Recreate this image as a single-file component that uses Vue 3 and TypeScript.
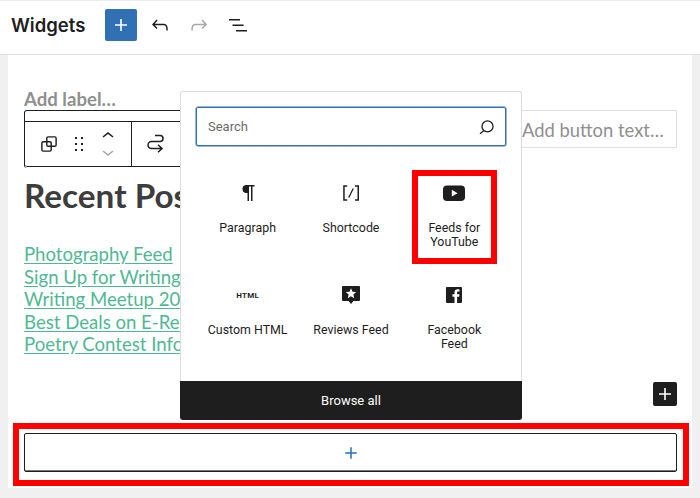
<script setup lang="ts">
const links: string[] = [
  'Photography Feed',
  'Sign Up for Writing Workshop',
  'Writing Meetup 2021',
  'Best Deals on E-Readers',
  'Poetry Contest Info',
]
</script>

<template>
  <div class="page">
    <header class="topbar">
      <h1 class="title">Widgets</h1>
      <button class="add-main" aria-label="Add">
        <svg viewBox="0 0 24 24" width="24" height="24"><path d="M18 11.2h-5.2V6h-1.6v5.2H6v1.6h5.2V18h1.6v-5.2H18z" fill="#fff" /></svg>
      </button>
      <svg class="tool first" viewBox="0 0 24 24" width="24" height="24"><path d="M18.3 11.7c-.6-.6-1.4-.9-2.3-.9H6.7l2.9-3.3-1.1-1-4.5 5L8.5 16l1-1-2.7-2.7H16c.5 0 .9.2 1.3.5 1 1 1 3.4 1 4.5v.3h1.5v-.2c0-1.5 0-4.3-1.5-5.7z" fill="#1e1e1e" /></svg>
      <svg class="tool" viewBox="0 0 24 24" width="24" height="24"><path d="M15.6 6.5l-1.1 1 2.9 3.3H8c-.9 0-1.7.3-2.3.9-1.4 1.5-1.4 4.2-1.4 5.6v.2h1.5v-.3c0-1.1 0-3.5 1-4.5.3-.3.7-.5 1.3-.5h9.2L14.5 15l1.1 1.1 4.6-4.6-4.6-5z" fill="#a7a7a7" /></svg>
      <svg class="tool" viewBox="0 0 24 24" width="24" height="24"><path d="M3 6h11v1.5H3V6zm3.5 5.5h11V13h-11v-1.5zM21 17H10v1.5h11V17z" fill="#1e1e1e" /></svg>
    </header>

    <main class="canvas">
      <div class="editor">
        <div class="label-text">Add label…</div>
        <div class="search-row">
          <div class="toolbar">
            <div class="group first-group">
              <svg viewBox="0 0 18 18" width="16" height="16" fill="none" stroke="#1e1e1e" stroke-width="1.6">
                <rect x="6.5" y="1" width="10.500" height="10.500" rx="1.500" />
                <rect x="1" y="6.500" width="10.500" height="10.500" rx="1.500" />
              </svg>
              <svg class="drag" viewBox="0 0 24 24" width="24" height="24"><path d="M8 7h2V5H8v2zm0 6h2v-2H8v2zm0 6h2v-2H8v2zm6-14v2h2V5h-2zm0 8h2v-2h-2v2zm0 6h2v-2h-2v2z" fill="#1e1e1e" /></svg>
              <div class="movers">
                <svg viewBox="0 4 24 16" width="24" height="16"><path d="M6.5 12.4L12 8l5.5 4.4-.9 1.2L12 10l-4.5 3.6-1-1.2z" fill="#1e1e1e" /></svg>
                <svg viewBox="0 4 24 16" width="24" height="16"><path d="M17.5 11.6L12 16l-5.5-4.4.9-1.2L12 14l4.5-3.6 1 1.2z" fill="#a7a7a7" /></svg>
              </div>
            </div>
            <div class="group">
              <svg viewBox="0 0 24 24" width="24" height="24" fill="none" stroke="#1e1e1e" stroke-width="1.5">
                <path d="M12 3.500H17A3 3 0 0 1 17 9.500H8.500A3.500 3.500 0 0 0 8.500 16.500H19M15 12.800L19 16.500L15 20.200" />
              </svg>
            </div>
          </div>
          <div class="button-text">Add button text…</div>
        </div>
        <h2 class="recent">Recent Posts</h2>
        <ul class="posts">
          <li v-for="link in links" :key="link"><a>{{ link }}</a></li>
        </ul>
        <div class="small-add-row">
          <button class="small-add" aria-label="Add block">
            <svg viewBox="0 0 24 24" width="24" height="24"><path d="M18 11.2h-5.2V6h-1.6v5.2H6v1.6h5.2V18h1.6v-5.2H18z" fill="#fff" /></svg>
          </button>
        </div>
      </div>

      <div class="marked">
        <button class="appender" aria-label="Add widget">
          <svg viewBox="0 0 24 24" width="24" height="24"><path d="M17.800 11.250h-5.050V6.200h-1.500v5.050H6.200v1.500h5.050v5.050h1.500v-5.050h5.050z" fill="#2271c0" /></svg>
        </button>
      </div>
    </main>

    <section class="inserter">
      <div class="inserter-body">
        <div class="search">
          <span>Search</span>
          <svg viewBox="0 0 24 24" width="24" height="24" fill="none" stroke="#1e1e1e" stroke-width="1.3"><circle cx="11.500" cy="11.400" r="5.500" /><path d="M8 15.500 4 18.800" /></svg>
        </div>
        <div class="grid">
          <div class="item">
            <div class="icon"><svg viewBox="0 0 24 24" width="24" height="24"><path d="M10.500 4H18.500V5.500H16.500V20H15V5.500H13V20H11.500V12H10.500A4 4 0 0 1 10.500 4z" fill="#1e1e1e" /></svg></div>
            <div class="name">Paragraph</div>
          </div>
          <div class="item">
            <div class="icon"><svg viewBox="0 0 24 24" width="24" height="24"><path d="M16 4.200v1.500h2.500v12.500H16v1.500h4V4.200h-4zM4.200 19.700h4v-1.500H5.700V5.700h2.500V4.200h-4z" fill="#1e1e1e" /><path d="M14.200 7.500 9.800 16.500" stroke="#1e1e1e" stroke-width="1.300" /></svg></div>
            <div class="name">Shortcode</div>
          </div>
          <div class="item">
            <div class="icon"><svg viewBox="0 0 24 24" width="24" height="24"><rect x="1" y="4.500" width="22" height="15.500" rx="4" fill="#1e1e1e" /><path d="M9.800 8.800 15.600 12.200 9.800 15.600z" fill="#fff" /></svg></div>
            <div class="name">Feeds for<br />YouTube</div>
            <div class="red-mark"></div>
          </div>
          <div class="item">
            <div class="icon"><span class="html">HTML</span></div>
            <div class="name">Custom HTML</div>
          </div>
          <div class="item">
            <div class="icon"><svg viewBox="0 0 24 24" width="24" height="24"><path d="M4 3H20a1 1 0 0 1 1 1V17a1 1 0 0 1-1 1H14.500L12 21 9.500 18H4a1 1 0 0 1-1-1V4a1 1 0 0 1 1-1z" fill="#1e1e1e" /><path d="M12 5.200 13.500 8.700 17.200 9.100 14.400 11.500 15.200 15.200 12 13.300 8.800 15.200 9.600 11.500 6.800 9.100 10.500 8.700z" fill="#fff" /></svg></div>
            <div class="name">Reviews Feed</div>
          </div>
          <div class="item">
            <div class="icon"><svg viewBox="0 0 24 24" width="24" height="24"><path transform="translate(1.300 1.300) scale(.89)" d="M20 3H4c-.6 0-1 .4-1 1v16c0 .5.4 1 1 1h8.600v-7h-2.300v-2.700h2.300v-2c0-2.300 1.400-3.600 3.500-3.600 1 0 1.800.1 2.100.1v2.400h-1.400c-1.100 0-1.300.5-1.300 1.300v1.700h2.700l-.4 2.800h-2.300v7H20c.5 0 1-.4 1-1V4c0-.6-.4-1-1-1z" fill="#1e1e1e" /></svg></div>
            <div class="name">Facebook<br />Feed</div>
          </div>
        </div>
      </div>
      <div class="browse">Browse all</div>
    </section>
  </div>
</template>

<style>
html,
body {
  margin: 0;
  background: #f0f0f0;
}
</style>

<style scoped>
.page {
  position: relative;
  width: 700px;
  height: 498px;
  overflow: hidden;
  display: flex;
  flex-direction: column;
  background: #f0f0f0;
  font-family: Roboto, "Liberation Sans", sans-serif;
  color: #1e1e1e;
}
.topbar {
  height: 55px;
  flex: none;
  box-sizing: border-box;
  display: flex;
  align-items: center;
  background: #fff;
  border-top: 1px solid #ececec;
  border-bottom: 1px solid #e0e0e0;
  padding: 0 0 6px 11px;
}
.title {
  margin: 0 20px 0 0;
  font-family: Inter, sans-serif;
  font-size: 18.500px;
  font-weight: 600;
  color: #1e1e1e;
}
button {
  border: 0;
  padding: 0;
  display: flex;
  align-items: center;
  justify-content: center;
  cursor: pointer;
}
.add-main {
  width: 32px;
  height: 32px;
  background: #3070b3;
  border-radius: 2px;
}
.tool {
  margin-left: 15px;
}
.tool.first {
  margin-left: 11px;
}
.canvas {
  flex: none;
  height: 433px;
  margin: 0 8px;
  background: #fff;
  display: flex;
  flex-direction: column;
}
.editor {
  height: 368px;
  padding: 34px 15px 0 16px;
  box-sizing: border-box;
  display: flex;
  flex-direction: column;
}
.label-text {
  font-family: Lato, sans-serif;
  font-weight: 700;
  font-size: 18.600px;
  line-height: 21px;
  color: #8f8f8f;
}
.search-row {
  display: flex;
  height: 38px;
}
.toolbar {
  width: 320px;
  height: 58px;
  box-sizing: border-box;
  flex: none;
  display: flex;
  border: 1px solid #1e1e1e;
  border-bottom: 0;
  border-radius: 3px 3px 0 3px;
  padding-top: 10px;
  position: relative;
  z-index: 1;
}
.group {
  height: 46px;
  border-top: 1px solid #1e1e1e;
  border-bottom: 1px solid #1e1e1e;
  box-sizing: border-box;
  display: flex;
  align-items: center;
  padding-left: 11px;
  flex: 1;
}
.first-group {
  flex: none;
  width: 107px;
  border-right: 1px solid #1e1e1e;
  padding-left: 16px;
  border-radius: 0 0 0 3px;
}
.drag {
  margin-left: 10px;
}
.movers {
  margin-left: 5px;
  display: flex;
  flex-direction: column;
}
.button-text {
  margin-left: 178px;
  flex: 1;
  border: 1px solid #e0e0e0;
  border-left: 0;
  font-family: Lato, sans-serif;
  font-size: 18.400px;
  line-height: 38px;
  color: #8f8f8f;
  white-space: nowrap;
}
.recent {
  width: 156px;
  overflow: hidden;
  margin: 28px 0 0;
  font-family: Lato, sans-serif;
  font-weight: 700;
  font-size: 33.300px;
  line-height: 38px;
  color: #3d3d3d;
  white-space: nowrap;
}
.posts {
  width: 156px;
  overflow: hidden;
  list-style: none;
  margin: 29px 0 0;
  padding: 0;
  font-family: Lato, sans-serif;
  font-size: 18.600px;
  line-height: 22.500px;
  color: #4fb893;
  white-space: nowrap;
}
.posts a {
  text-decoration: underline;
  text-underline-offset: 2px;
}
.small-add-row {
  display: flex;
  justify-content: flex-end;
  margin-top: 26px;
}
.small-add {
  width: 24px;
  height: 24px;
  background: #1e1e1e;
  border-radius: 2px;
}
.marked {
  margin: 0 3px 0 5px;
  border: 6px solid #ff0000;
  padding: 4px 6px 7px 5px;
  height: 63px;
  box-sizing: border-box;
}
.appender {
  width: 100%;
  height: 39px;
  background: #fff;
  border: 1px solid #1e1e1e;
  border-radius: 2px;
  box-shadow: inset 0 -1px 0 #777;
}
.inserter {
  position: absolute;
  left: 180px;
  top: 91px;
  width: 342px;
  height: 329px;
  box-sizing: border-box;
  display: flex;
  flex-direction: column;
  background: #fff;
  border: 1px solid #ddd;
  border-bottom: 0;
  border-radius: 3px;
  z-index: 5;
}
.inserter-body {
  flex: 1 1 0;
  min-height: 0;
  padding: 15px 15px 0;
}
.search {
  height: 39px;
  box-sizing: border-box;
  border: 1px solid #3070b3;
  border-radius: 2px;
  box-shadow: 0 0 0 0.5px #3070b3;
  display: flex;
  align-items: center;
  justify-content: space-between;
  padding: 0 5px 0 11px;
  font-size: 13px;
  color: #6b6b6b;
}
.grid {
  margin-top: 35px;
  display: grid;
  grid-template-columns: repeat(3, 1fr);
  grid-template-rows: 102px auto;
}
.item {
  position: relative;
  display: flex;
  flex-direction: column;
  align-items: center;
  text-align: center;
}
.icon {
  height: 24px;
  display: flex;
  align-items: center;
  justify-content: center;
}
.name {
  margin-top: 16px;
  font-size: 12.400px;
  line-height: 14px;
  color: #1e1e1e;
  white-space: nowrap;
}
.html {
  font-size: 8px;
  font-weight: 700;
  letter-spacing: 0.2px;
}
.red-mark {
  position: absolute;
  left: 9px;
  top: -11px;
  width: 85px;
  height: 94px;
  box-sizing: border-box;
  border: 6px solid #ff0000;
}
.browse {
  height: 39px;
  flex: none;
  margin: 0 -1px;
  border-radius: 0 0 3px 3px;
  background: #1e1e1e;
  color: #fff;
  font-size: 13px;
  line-height: 39px;
  text-align: center;
}
</style>
